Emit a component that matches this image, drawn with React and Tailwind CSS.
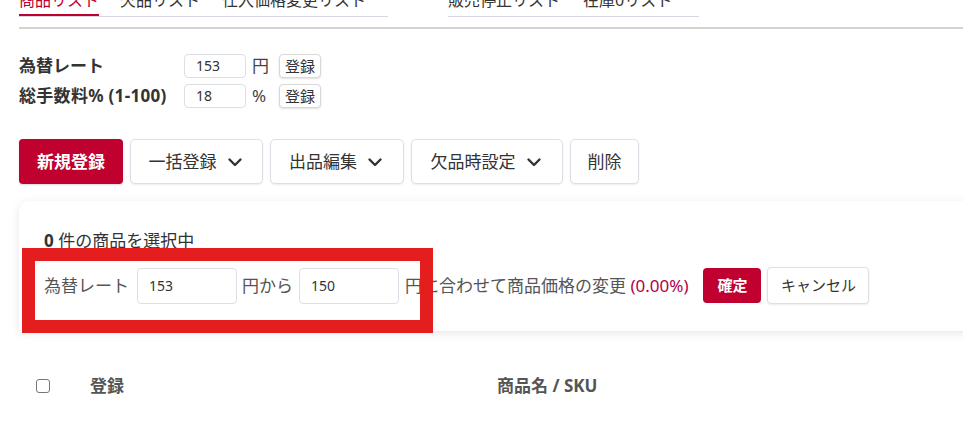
import React from 'react';

const Chevron = () => (
    <svg className="w-[20px] h-[20px] ml-[8px]" viewBox="0 0 20 20" fill="none">
        <path d="M4.5 7.5 L10 13 L15.5 7.5" stroke="#333" strokeWidth="2.4" strokeLinecap="round" strokeLinejoin="round" />
    </svg>
);

const App = () => {
    const font = { fontFamily: '"Noto Sans", "Noto Sans CJK JP", sans-serif' };

    return (
        <div className="w-[963px] h-[421px] overflow-hidden bg-white text-[#333]" style={font}>
            <div className="pl-[19px]">
                {/* tabs */}
                <div className="flex items-end -mt-[11px] text-[16px] leading-[22px]">
                    <div className="flex border-b border-[#d5d8e0] w-[369px]">
                        <div className="pb-[3px] border-b-2 border-[#c0002f] text-[#c0002f]">商品リスト</div>
                        <div className="pb-[3px] ml-[21px] border-b-2 border-transparent">欠品リスト</div>
                        <div className="pb-[3px] ml-[22px] border-b-2 border-transparent">仕入価格変更リスト</div>
                    </div>
                    <div className="flex border-b border-[#d5d8e0] w-[251px] ml-[60px]">
                        <div className="pb-[3px] border-b-2 border-transparent">販売停止リスト</div>
                        <div className="pb-[3px] ml-[23px] border-b-2 border-transparent">在庫0リスト</div>
                    </div>
                </div>
                <div className="mt-[10px] h-[2px] bg-[#d3d3d3]"></div>

                {/* settings */}
                <div className="mt-[25px] flex flex-col gap-[6px]">
                    <div className="flex items-center h-[24px]">
                        <div className="w-[165px] font-bold text-[17px]">為替レート</div>
                        <div className="w-[62px] h-[24px] border border-[#dcdfe6] rounded-[4px] pl-[11px] text-[14px] leading-[22px]">153</div>
                        <div className="w-[33px] pl-[6px] text-[17px] text-[#444]">円</div>
                        <button className="h-[24px] px-[5px] border border-[#d8d8d8] rounded-[4px] shadow-[0_1px_2px_rgba(0,0,0,0.12)] text-[15px] leading-[20px] bg-white">登録</button>
                    </div>
                    <div className="flex items-center h-[24px]">
                        <div className="w-[165px] font-bold text-[17px] whitespace-nowrap tracking-[0.3px]">総手数料% (1-100)</div>
                        <div className="w-[62px] h-[24px] border border-[#dcdfe6] rounded-[4px] pl-[11px] text-[14px] leading-[22px]">18</div>
                        <div className="w-[33px] pl-[6px] text-[17px] text-[#444]">%</div>
                        <button className="h-[24px] px-[5px] border border-[#d8d8d8] rounded-[4px] shadow-[0_1px_2px_rgba(0,0,0,0.12)] text-[15px] leading-[20px] bg-white">登録</button>
                    </div>
                </div>

                {/* action buttons */}
                <div className="mt-[31px] flex gap-[7px] text-[17px]">
                    <button className="h-[45px] w-[104px] rounded-[4px] bg-[#c0002f] text-white font-bold shadow-[0_1px_2px_rgba(0,0,0,0.15)]">新規登録</button>
                    <button className="h-[45px] w-[133px] flex items-center justify-center rounded-[5px] border border-[#dcdfe6] bg-white shadow-[0_1px_2px_rgba(0,0,0,0.08)]">一括登録<Chevron /></button>
                    <button className="h-[45px] w-[134px] flex items-center justify-center rounded-[5px] border border-[#dcdfe6] bg-white shadow-[0_1px_2px_rgba(0,0,0,0.08)]">出品編集<Chevron /></button>
                    <button className="h-[45px] w-[152px] flex items-center justify-center rounded-[5px] border border-[#dcdfe6] bg-white shadow-[0_1px_2px_rgba(0,0,0,0.08)]">欠品時設定<Chevron /></button>
                    <button className="h-[45px] w-[69px] rounded-[5px] border border-[#dcdfe6] bg-white shadow-[0_1px_2px_rgba(0,0,0,0.08)]">削除</button>
                </div>

                {/* selection panel */}
                <div className="relative mt-[17px] w-[980px] h-[130px] rounded-tl-[10px] rounded-bl-[4px] bg-white shadow-[0_2px_10px_rgba(0,0,0,0.1)] pl-[25px] pt-[28px]">
                    <div className="text-[17px] leading-[23px]"><span className="font-bold">0</span> 件の商品を選択中</div>
                    <div className="mt-[15px] flex items-center text-[17px] text-[#555] whitespace-nowrap">
                        <span>為替レート</span>
                        <div className="ml-[8px] w-[100px] h-[36px] border border-[#dcdfe6] rounded-[4px] pl-[11px] text-[14px] leading-[34px] text-[#333]">153</div>
                        <span className="ml-[5px]">円から</span>
                        <div className="ml-[6px] w-[100px] h-[36px] border border-[#dcdfe6] rounded-[4px] pl-[11px] text-[14px] leading-[34px] text-[#333]">150</div>
                        <span className="ml-[6px]">円に合わせて商品価格の変更 <span className="text-[#b0004a]">(0.00%)</span></span>
                        <button className="ml-[15px] h-[35px] w-[58px] rounded-[4px] bg-[#c0002f] text-white font-bold text-[15px]">確定</button>
                        <button className="ml-[6px] h-[37px] w-[102px] rounded-[4px] border border-[#dcdfe6] bg-white text-[#333] text-[15px] shadow-[0_1px_2px_rgba(0,0,0,0.08)]">キャンセル</button>
                    </div>
                    <div className="absolute left-[3px] top-[47px] w-[411px] h-[85px] border-[13px] border-[#e41e1e] pointer-events-none"></div>
                </div>

                {/* table header */}
                <div className="mt-[42px] flex items-center text-[17px] font-bold text-[#555]">
                    <div className="ml-[17px] w-[14px] h-[14px] border border-[#777] rounded-[3px]"></div>
                    <div className="ml-[40px] w-[407px]">登録</div>
                    <div>商品名 / SKU</div>
                </div>
            </div>
        </div>
    );
};

export default App;
